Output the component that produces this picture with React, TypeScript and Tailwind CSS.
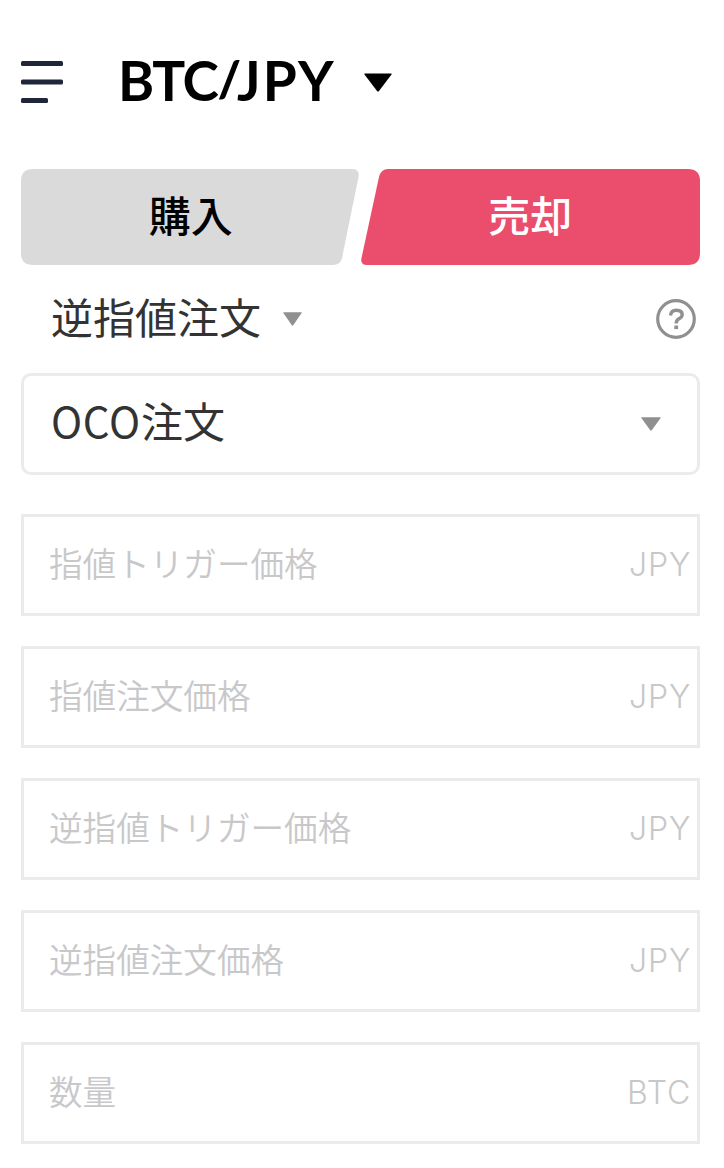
const fields = [
  { label: '指値トリガー価格', unit: 'JPY' },
  { label: '指値注文価格', unit: 'JPY' },
  { label: '逆指値トリガー価格', unit: 'JPY' },
  { label: '逆指値注文価格', unit: 'JPY' },
  { label: '数量', unit: 'BTC' },
];

const Caret = ({ className }: { className: string }) => (
  <svg className={className} viewBox="0 0 28 19" fill="currentColor" preserveAspectRatio="none">
    <path d="M1 .5h26q1 0 .5 1L15 18q-1 1-2 0L.5 1.5Q0 .5 1 .5z" />
  </svg>
);

const App = () => {
  return (
    <div className="w-[724px] h-[1168px] overflow-hidden bg-white pl-[21px] pr-6 font-['Noto_Sans_CJK_JP',sans-serif] text-[#333333]">
      {/* Header */}
      <header className="flex h-[169px] items-start pt-[60px]">
        <button className="mt-px h-[42px] w-[42px]" aria-label="メニュー">
          <svg className="h-[42px] w-[42px]" viewBox="0 0 42 42" fill="#20253a">
            <rect width="42" height="5" rx="1.5" />
            <rect y="18.5" width="42" height="5" rx="1.5" />
            <rect y="37" width="27" height="5" rx="1.5" />
          </svg>
        </button>
        <h1 className="ml-[55px] flex h-10 w-[217px] items-center whitespace-nowrap font-['Lato',sans-serif] text-[55px] font-bold leading-none text-black">
          <span className="tracking-[-1.5px]">BTC</span>
          <span className="mb-1 text-[50px] font-black tracking-[-4px]">/</span>
          <span className="tracking-[2.2px]">JPY</span>
        </h1>
        <Caret className="ml-[29px] mt-[13px] h-[19px] w-7 text-black" />
      </header>

      {/* Buy / sell tabs */}
      <div className="grid h-24 grid-cols-2">
        <button className="relative flex items-center justify-center pb-1.5 text-[42px] font-medium leading-none text-black">
          <svg className="absolute left-0 top-0 h-24 w-[339px]" viewBox="0 0 339 96" fill="#dadada">
            <path d="M12 0H331Q339 0 337.500 8L321 89Q319.500 96 312 96H12Q0 96 0 84V12Q0 0 12 0z" />
          </svg>
          <span className="relative">購入</span>
        </button>
        <button className="relative flex items-center justify-center pb-1.5 text-[42px] font-medium leading-none text-white">
          <svg className="absolute right-0 top-0 h-24 w-[339px]" viewBox="0 0 339 96" fill="#eb4d6d">
            <path d="M27 0H327Q339 0 339 12V84Q339 96 327 96H6Q-1 96 .5 89L18 8Q20 0 27 0z" />
          </svg>
          <span className="relative">売却</span>
        </button>
      </div>

      {/* Order type */}
      <div className="flex h-[108px] items-center justify-between pl-[30px] pr-1">
        <button className="flex items-center text-[42px] leading-none">
          <span className="pb-1.5">逆指値注文</span>
          <Caret className="ml-[22px] h-[14px] w-[19px] text-[#909090]" />
        </button>
        <svg className="h-10 w-10 text-[#909090]" viewBox="0 0 40 40" fill="none" stroke="currentColor">
          <circle cx="20" cy="20" r="18.300" strokeWidth="3.200" />
          <path d="M14.500 16.500Q15 11.200 20.200 11.200Q26.200 11.200 26.200 15.800Q26.200 18 23 19.800Q20.200 21.300 20.200 24.500" strokeWidth="3.400" />
          <path d="M20.200 26.500v3.600" strokeWidth="3.800" />
        </svg>
      </div>

      <div className="flex h-[102px] items-center justify-between rounded-[10px] border-[3px] border-[#ebebeb] pl-[27px] pr-9">
        <span className="pb-2 text-[42px] leading-none">
          <span className="tracking-[0.7px]">OCO</span>注文
        </span>
        <Caret className="h-[14px] w-5 text-[#909090]" />
      </div>

      {/* Order fields */}
      <div className="mt-[39px] flex flex-col gap-[30px]">
        {fields.map(({ label, unit }) => (
          <div
            key={label}
            className="flex h-[102px] items-center justify-between border-[3px] border-[#ebebeb] pl-[25px] pr-[6px]"
          >
            <span className="pb-[5px] text-[33.600px] font-[350] leading-none text-[#c8c8ca]">{label}</span>
            <span className="font-['Inter',sans-serif] text-[32px] font-[350] leading-none tracking-[0.8px] text-[#c8c8c8]">
              {unit}
            </span>
          </div>
        ))}
      </div>
    </div>
  );
};

export default App;
